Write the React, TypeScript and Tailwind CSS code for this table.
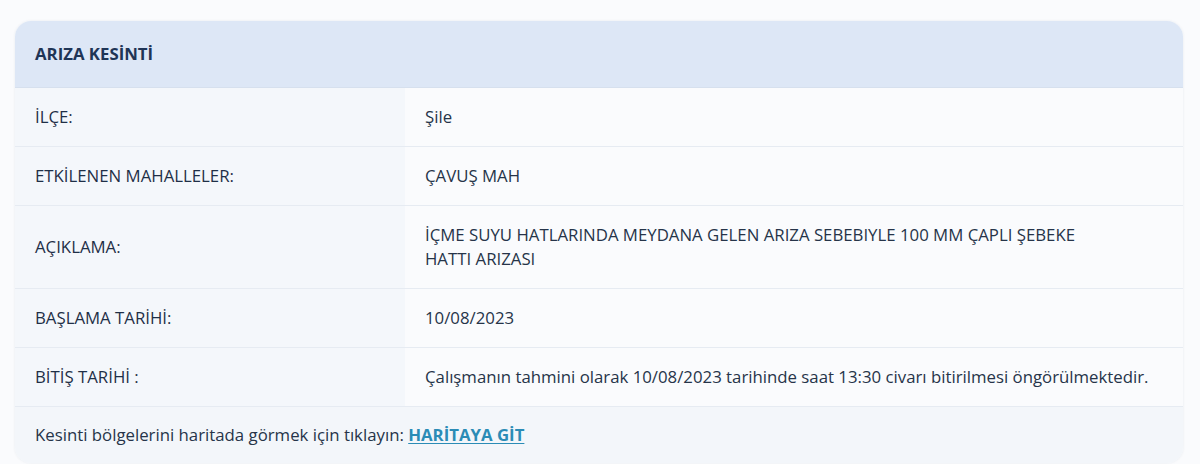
import React from 'react';

const rows: { label: string; value: string; narrow?: boolean }[] = [
    { label: 'İLÇE:', value: 'Şile' },
    { label: 'ETKİLENEN MAHALLELER:', value: 'ÇAVUŞ MAH' },
    { label: 'AÇIKLAMA:', value: 'İÇME SUYU HATLARINDA MEYDANA GELEN ARIZA SEBEBIYLE 100 MM ÇAPLI ŞEBEKE HATTI ARIZASI', narrow: true },
    { label: 'BAŞLAMA TARİHİ:', value: '10/08/2023' },
    { label: 'BİTİŞ TARİHİ :', value: 'Çalışmanın tahmini olarak 10/08/2023 tarihinde saat 13:30 civarı bitirilmesi öngörülmektedir.' },
];

export default function App() {
    return (
        <div className="min-h-[464px] w-[1200px] bg-[#fafbfd] pt-[21px] pl-[15px] pr-[17px] font-['Open_Sans',sans-serif] text-[16.8px] text-[#263449]">
            <div className="rounded-[16px] overflow-hidden shadow-[0_0_3px_rgba(30,50,90,0.08)] bg-[#fafbfd]">
                {/* Header */}
                <div className="bg-[#dde7f6] px-5 py-[21px] leading-6 font-bold text-[#1f3556] border-b border-[#d6e0ee]">
                    ARIZA KESİNTİ
                </div>

                {rows.map((row) => (
                    <div key={row.label} className="grid grid-cols-[390px_1fr] border-b border-[#e6ebf2]">
                        <div className="bg-[#f4f7fb] px-5 py-[17px] leading-6 flex items-center font-medium text-[#1f2f47]">{row.label}</div>
                        <div className="pl-5 pr-2 py-[17px] leading-6">
                            <p className={row.narrow ? 'max-w-[690px]' : ''}>{row.value}</p>
                        </div>
                    </div>
                ))}

                {/* Footer */}
                <div className="bg-[#f3f6fa] px-5 py-[16px] leading-6">
                    Kesinti bölgelerini haritada görmek için tıklayın:{' '}
                    <a href="#" className="font-bold text-[#2b8cb6] underline underline-offset-2">HARİTAYA GİT</a>
                </div>
            </div>
        </div>
    );
}
